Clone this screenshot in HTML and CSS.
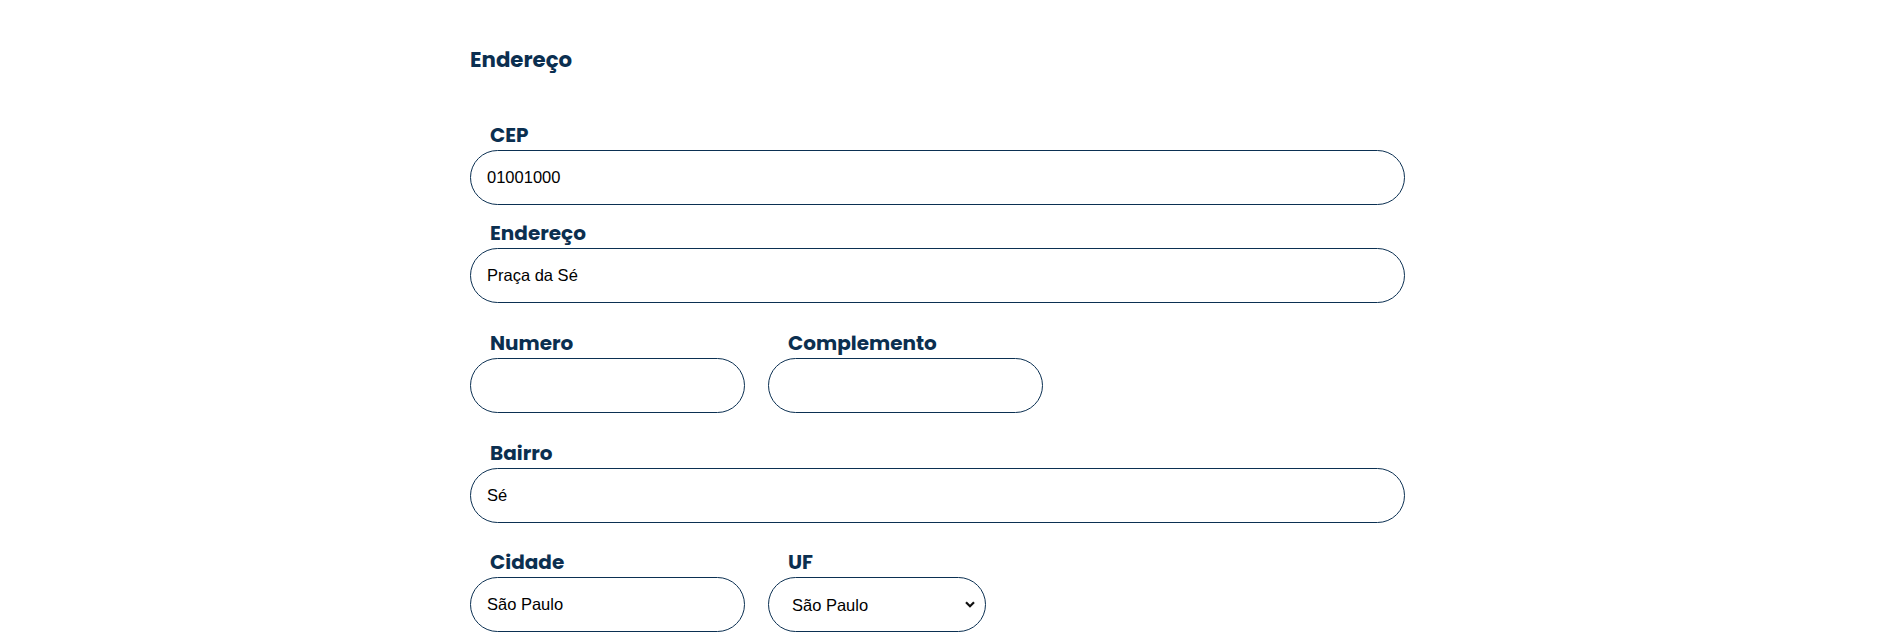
FILE: index.html
```html
<!DOCTYPE html>
<html lang="pt-BR">
<head>
<meta charset="utf-8">
<title>Endereço</title>
<link rel="stylesheet" href="styles.css">
</head>
<body>
<main class="form">
  <h2 class="title">Endereço</h2>
  <div class="fields">
    <div class="field">
      <label class="label" for="cep">CEP</label>
      <input class="input" id="cep" type="text" value="01001000">
    </div>
    <div class="field">
      <label class="label" for="end">Endereço</label>
      <input class="input" id="end" type="text" value="Praça da Sé">
    </div>
    <div class="row spaced">
      <div class="field">
        <label class="label" for="num">Numero</label>
        <input class="input" id="num" type="text" value="">
      </div>
      <div class="field">
        <label class="label" for="comp">Complemento</label>
        <input class="input" id="comp" type="text" value="">
      </div>
    </div>
    <div class="field spaced">
      <label class="label" for="bairro">Bairro</label>
      <input class="input" id="bairro" type="text" value="Sé">
    </div>
    <div class="row spaced-sm">
      <div class="field">
        <label class="label" for="cidade">Cidade</label>
        <input class="input" id="cidade" type="text" value="São Paulo">
      </div>
      <div class="field">
        <label class="label" for="uf">UF</label>
        <div class="select-wrap">
          <select class="select" id="uf">
            <option>São Paulo</option>
          </select>
          <svg class="chevron" width="10" height="7" viewBox="0 0 10 7" aria-hidden="true"><path d="M1 1.2 L5 5.2 L9 1.2" fill="none" stroke="#111" stroke-width="2.2"/></svg>
        </div>
      </div>
    </div>
  </div>
</main>
</body>
</html>
```
FILE: styles.css
```css
html, body {
  margin: 0;
  padding: 0;
  background: #ffffff;
}

.form {
  width: 935px;
  margin-left: 470px;
  padding-top: 48px;
}

.title {
  margin: 0;
  font-family: "Poppins", "DejaVu Sans", sans-serif;
  font-weight: 700;
  font-size: 21.3px;
  line-height: 24px;
  color: #0b2f50;
  letter-spacing: 0;
}

.fields {
  display: flex;
  flex-direction: column;
  gap: 17px;
  margin-top: 52px;
}

.field {
  display: flex;
  flex-direction: column;
  gap: 4px;
}

.spaced {
  margin-top: 12px;
}

.spaced-sm {
  margin-top: 11px;
}

.row {
  display: grid;
  grid-template-columns: 275px 275px;
  column-gap: 23px;
}

.label {
  display: block;
  padding-left: 20px;
  font-family: "Poppins", "DejaVu Sans", sans-serif;
  font-weight: 700;
  font-size: 20px;
  line-height: 22px;
  color: #0b2f50;
}

.input,
.select {
  box-sizing: border-box;
  width: 100%;
  height: 55px;
  margin: 0;
  padding: 0 16px;
  border: 1px solid #0b3052;
  border-radius: 28px;
  background: #ffffff;
  font-family: Arial, "Liberation Sans", sans-serif;
  font-size: 16.5px;
  color: #000000;
  outline: none;
}

.select-wrap {
  position: relative;
  width: 218px;
}

.select {
  -webkit-appearance: none;
  appearance: none;
  padding-left: 23px;
  padding-right: 30px;
}

.chevron {
  position: absolute;
  right: 11px;
  top: 24px;
  pointer-events: none;
}
```
